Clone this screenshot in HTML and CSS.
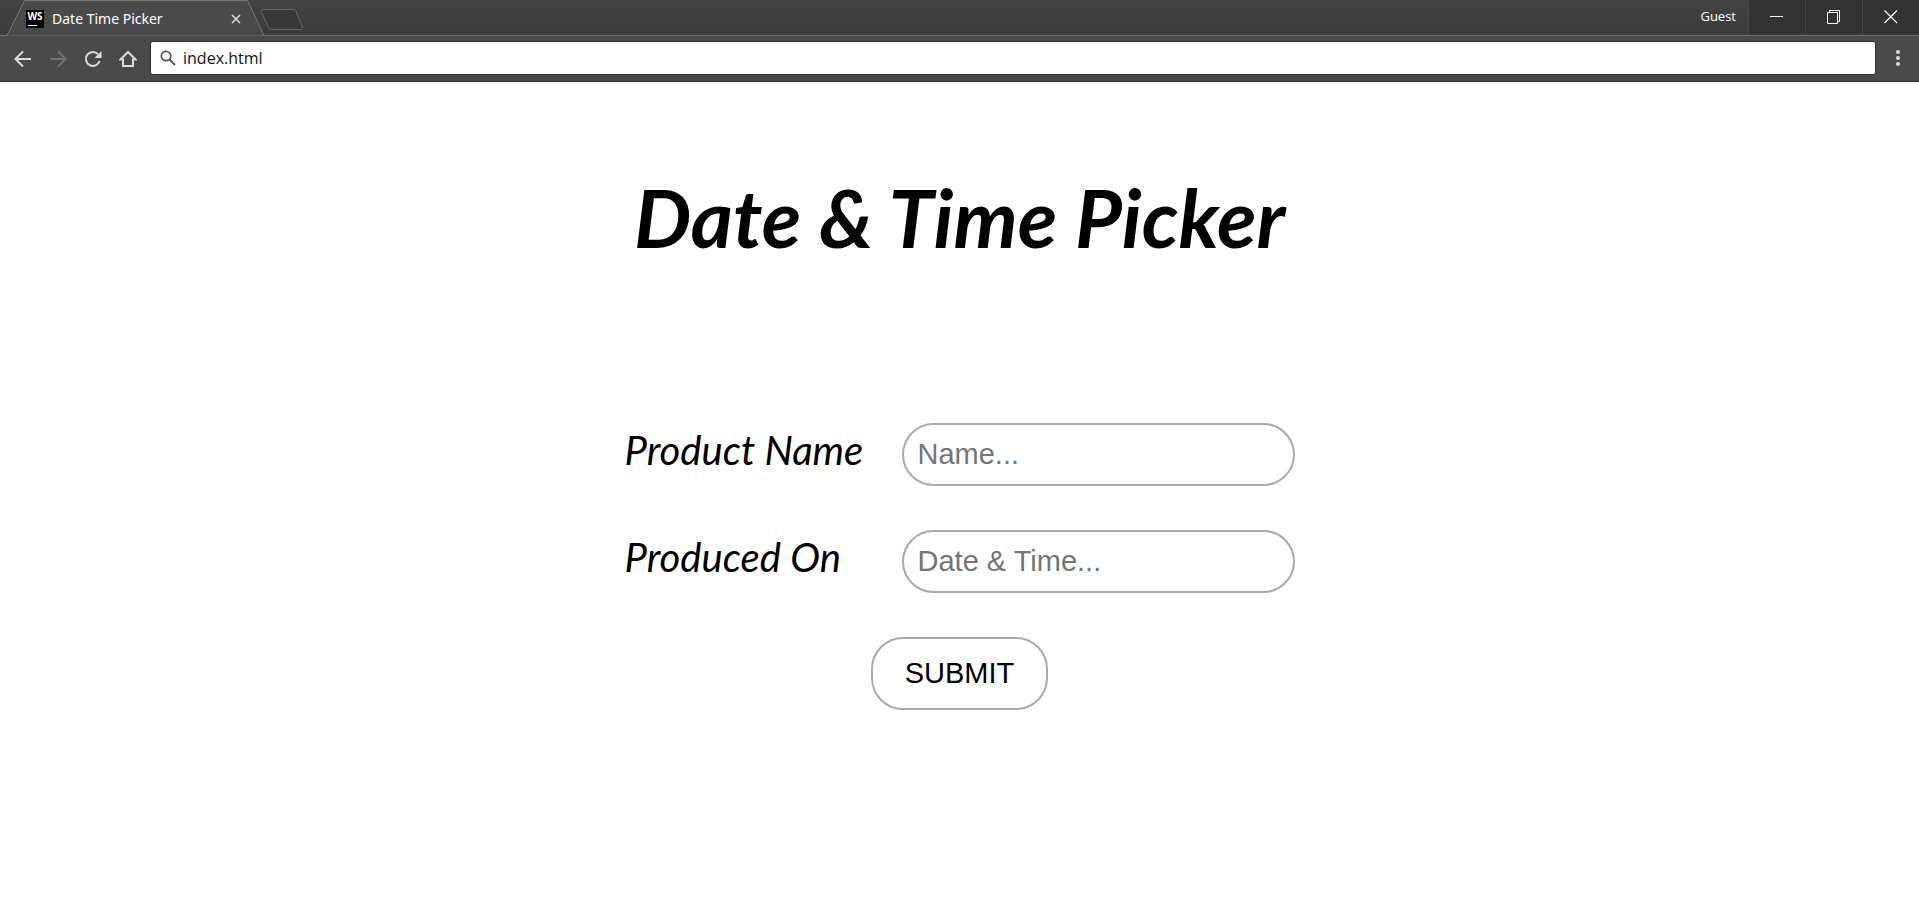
FILE: index.html
```html
<!DOCTYPE html>
<html lang="en">
<head>
<meta charset="utf-8">
<title>Date Time Picker</title>
<link rel="stylesheet" href="styles.css">
</head>
<body>
<header class="browser">
  <div class="tabstrip">
    <div class="tab">
      <svg class="tab-shape" width="264" height="36" viewBox="0 0 264 36" aria-hidden="true"><path class="tab-fill" d="M0 35.5H7L24.500.5H247.500L264 35.500"/></svg>
      <span class="tab-logo" aria-hidden="true">WS</span>
      <span class="tab-title">Date Time Picker</span>
      <button class="tab-close" type="button" aria-label="Close tab"><svg width="10" height="10" viewBox="0 0 10 10"><path d="M1 1L9 9M9 1L1 9" stroke="#d6d6d6" stroke-width="1.700"/></svg></button>
    </div>
    <button class="new-tab" type="button" aria-label="New tab"><svg width="44" height="22" viewBox="0 0 44 22"><path d="M3.500.5H33Q35 .5 36 2.500L42.500 18Q43 20.500 41 20.500H12Q9.500 20.500 8.500 18.500L1.500 3Q1 .5 3.500.5Z" fill="#383838" stroke="#686868"/></svg></button>
    <div class="window-controls">
      <span class="guest">Guest</span>
      <button class="window-button" type="button" aria-label="Minimize"><svg width="14" height="14" viewBox="0 0 14 14"><path d="M0 6.500H13" stroke="#fff"/></svg></button>
      <button class="window-button" type="button" aria-label="Restore"><svg width="14" height="14" viewBox="0 0 14 14"><path d="M.5 2.500H10.500V13.500H.5ZM2.500 2.500V.5H12.500V11.500H10.500" fill="none" stroke="#fff"/></svg></button>
      <button class="window-button" type="button" aria-label="Close"><svg width="14" height="14" viewBox="0 0 14 14"><path d="M.5.5L13 13M13 .5L.5 13" stroke="#fff" stroke-width="1.200"/></svg></button>
    </div>
  </div>
  <div class="toolbar">
    <nav class="nav">
      <button class="nav-button" type="button" aria-label="Back"><svg width="18" height="18" viewBox="0 0 18 18"><path d="M17 9H2M9 1.500L1.500 9L9 16.500" fill="none" stroke="#dcdcdc" stroke-width="2"/></svg></button>
      <button class="nav-button" type="button" aria-label="Forward"><svg width="18" height="18" viewBox="0 0 18 18"><path d="M1 9H16M9 1.500L16.500 9L9 16.500" fill="none" stroke="#717171" stroke-width="2"/></svg></button>
      <button class="nav-button" type="button" aria-label="Reload"><svg width="18" height="18" viewBox="0 0 18 18"><path d="M15.600 11A7 7 0 1 1 14 4.100" fill="none" stroke="#dcdcdc" stroke-width="2"/><path d="M17.500 1V8H10.500Z" fill="#dcdcdc"/></svg></button>
      <button class="nav-button" type="button" aria-label="Home"><svg width="18" height="18" viewBox="0 0 18 18"><path d="M1.500 9.500L9 2L16.500 9.500H14V16H4V9.500Z" fill="none" stroke="#dcdcdc" stroke-width="2"/></svg></button>
    </nav>
    <div class="address">
      <svg width="16" height="16" viewBox="0 0 16 16" aria-hidden="true"><circle cx="6" cy="6" r="4.700" fill="none" stroke="#555" stroke-width="1.700"/><path d="M9.500 9.500L15 15" stroke="#555" stroke-width="2"/></svg>
      <input class="address-input" type="text" aria-label="Address" value="index.html">
    </div>
    <button class="menu-button" type="button" aria-label="Menu"><svg width="4" height="18" viewBox="0 0 4 18" fill="#dcdcdc"><circle cx="2" cy="3" r="2"/><circle cx="2" cy="9" r="2"/><circle cx="2" cy="15" r="2"/></svg></button>
  </div>
</header>
<main class="page">
  <h1 class="title">Date &amp; Time Picker</h1>
  <form class="form">
    <div class="row">
      <label class="label" for="name">Product Name</label>
      <input class="field" id="name" type="text" placeholder="Name...">
    </div>
    <div class="row">
      <label class="label" for="date">Produced On</label>
      <input class="field" id="date" type="text" placeholder="Date &amp; Time...">
    </div>
    <button class="submit" type="button">SUBMIT</button>
  </form>
</main>
</body>
</html>
```
FILE: styles.css
```css
* { box-sizing: border-box; }
body { margin: 0; background: #fff; color: #000; font-family: "Open Sans", "Noto Sans", sans-serif; }
button, input { margin: 0; padding: 0; border: 0; background: none; font: inherit; color: inherit; }
button { display: flex; align-items: center; justify-content: center; }
svg { display: block; flex: none; }

.browser { color: #fff; background: #4a4a4a; border-bottom: 1px solid #333; }
.tabstrip { display: flex; height: 36px; background: linear-gradient(#434343, #3a3a3a); box-shadow: inset 0 -1px #707070; }
.tab { position: relative; display: flex; align-items: center; width: 264px; height: 36px; padding: 2px 21px 0 26px; }
.tab-shape { position: absolute; left: 0; top: 0; }
.tab-fill { fill: #4a4a4a; stroke: #777; }
.tab-logo { position: relative; width: 18px; height: 18px; background: #000; font: bold 10px/12px "Open Sans", sans-serif; text-align: center; }
.tab-logo::after { content: ""; position: absolute; left: 2px; bottom: 2px; width: 9px; height: 1px; background: #fff; }
.tab-title { position: relative; flex: 1; margin-left: 8px; font: 14px/18px "Noto Sans", sans-serif; }
.tab-close { position: relative; width: 14px; height: 14px; }
.new-tab { align-self: flex-start; margin: 9px 0 0 -4px; }
.window-controls { display: flex; height: 34px; margin-left: auto; }
.guest { margin-right: 12px; font-size: 13px; line-height: 33px; }
.window-button { width: 57px; height: 34px; background: #333; border-left: 1px solid #454545; }
.toolbar { display: flex; align-items: center; padding: 5px 17px 6px 14px; }
.nav { display: flex; gap: 17px; margin-right: 13px; padding-top: 1px; }
.nav-button { width: 18px; height: 18px; }
.address { display: flex; flex: 1; align-items: center; gap: 7px; height: 34px; padding-left: 9px; background: #fff; border: 1px solid #333; border-radius: 3px; }
.address-input { flex: 1; min-width: 0; height: 24px; color: #111; font-size: 16px; }
.menu-button { width: 8px; height: 18px; margin-left: 18px; }

.page { padding: 75px 24px; }
.title { margin: 0 0 146px; font: italic bold 81px/120px Lato, sans-serif; text-align: center; }
.form { display: flex; flex-direction: column; align-items: center; gap: 44px; }
.row { display: flex; align-items: center; justify-content: space-between; width: 100%; max-width: 670px; }
.label { padding-bottom: 10px; font: italic 40px/48px Lato, sans-serif; white-space: nowrap; }
.field { width: 393px; height: 63px; padding: 0 14px; border: 2px solid #a9a9a9; border-radius: 32px; font: 29px/34px "Liberation Sans", Arial, sans-serif; }
.field::placeholder { color: #757575; opacity: 1; }
.submit { padding: 17px 32px 18px; border: 2px solid #a9a9a9; border-radius: 32px; font: 29px/34px "Liberation Sans", Arial, sans-serif; }
```
